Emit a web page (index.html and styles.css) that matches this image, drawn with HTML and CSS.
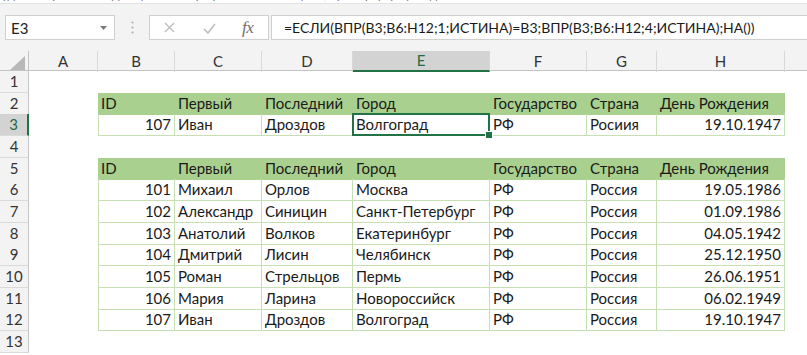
FILE: index.html
```html
<!DOCTYPE html>
<html lang="ru">
<head>
<meta charset="utf-8">
<link rel="stylesheet" href="styles.css">
</head>
<body>
<div class="app">
  <div class="topstrip"><span>удобно применять функцию ВПР при работе с таблицами, пример формулы для поиска</span></div>
  <div class="fbar">
    <div class="namebox"><span class="nb-text">E3</span>
      <svg class="nb-arrow" width="7" height="4" viewBox="0 0 7 4"><path d="M0 0h7L3.5 4z" fill="#7a7a7a"/></svg>
    </div>
    <div class="grip">
      <svg width="3" height="13" viewBox="0 0 3 13"><circle cx="1.5" cy="1.5" r="1.1" fill="#b0b0b0"/><circle cx="1.5" cy="6.5" r="1.1" fill="#b0b0b0"/><circle cx="1.5" cy="11.5" r="1.1" fill="#b0b0b0"/></svg>
    </div>
    <div class="iconbox">
      <svg class="ic-x" width="11" height="11" viewBox="0 0 11 11"><path d="M1 1l9 9M10 1l-9 9" stroke="#bdbdbd" stroke-width="1.3" fill="none"/></svg>
      <svg class="ic-check" width="13" height="11" viewBox="0 0 13 11"><path d="M1 6l4 4 7-9" stroke="#bdbdbd" stroke-width="1.6" fill="none"/></svg>
      <span class="ic-fx">fx</span>
    </div>
    <div class="formula">=ЕСЛИ(ВПР(B3;B6:H12;1;ИСТИНА)=B3;ВПР(B3;B6:H12;4;ИСТИНА);НА())</div>
  </div>

  <div class="sheet">
    <div class="row colhdr">
      <div class="corner"><svg width="15" height="14" viewBox="0 0 15 14"><path d="M15 0V14H0z" fill="#b8b8b8"/></svg></div>
      <div class="ch">A</div><div class="ch">B</div><div class="ch">C</div><div class="ch">D</div>
      <div class="ch active">E</div><div class="ch">F</div><div class="ch">G</div><div class="ch">H</div><div class="ch last"></div>
    </div>

    <div class="row"><div class="rh">1</div></div>

    <div class="row">
      <div class="rh">2</div><div class="c"></div>
      <div class="c th">ID</div><div class="c th">Первый</div><div class="c th">Последний</div><div class="c th">Город</div><div class="c th">Государство</div><div class="c th">Страна</div><div class="c th">День Рождения</div>
    </div>
    <div class="row">
      <div class="rh active">3</div><div class="c"></div>
      <div class="c td first num">107</div><div class="c td">Иван</div><div class="c td">Дроздов</div><div class="c td sel">Волгоград</div><div class="c td">РФ</div><div class="c td">Росиия</div><div class="c td num">19.10.1947</div>
    </div>

    <div class="row"><div class="rh">4</div></div>

    <div class="row">
      <div class="rh">5</div><div class="c"></div>
      <div class="c th">ID</div><div class="c th">Первый</div><div class="c th">Последний</div><div class="c th">Город</div><div class="c th">Государство</div><div class="c th">Страна</div><div class="c th">День Рождения</div>
    </div>
    <div class="row">
      <div class="rh">6</div><div class="c"></div>
      <div class="c td first num">101</div><div class="c td">Михаил</div><div class="c td">Орлов</div><div class="c td">Москва</div><div class="c td">РФ</div><div class="c td">Россия</div><div class="c td num">19.05.1986</div>
    </div>
    <div class="row">
      <div class="rh">7</div><div class="c"></div>
      <div class="c td first num">102</div><div class="c td">Александр</div><div class="c td">Синицин</div><div class="c td">Санкт-Петербург</div><div class="c td">РФ</div><div class="c td">Россия</div><div class="c td num">01.09.1986</div>
    </div>
    <div class="row">
      <div class="rh">8</div><div class="c"></div>
      <div class="c td first num">103</div><div class="c td">Анатолий</div><div class="c td">Волков</div><div class="c td">Екатеринбург</div><div class="c td">РФ</div><div class="c td">Россия</div><div class="c td num">04.05.1942</div>
    </div>
    <div class="row">
      <div class="rh">9</div><div class="c"></div>
      <div class="c td first num">104</div><div class="c td">Дмитрий</div><div class="c td">Лисин</div><div class="c td">Челябинск</div><div class="c td">РФ</div><div class="c td">Россия</div><div class="c td num">25.12.1950</div>
    </div>
    <div class="row">
      <div class="rh">10</div><div class="c"></div>
      <div class="c td first num">105</div><div class="c td">Роман</div><div class="c td">Стрельцов</div><div class="c td">Пермь</div><div class="c td">РФ</div><div class="c td">Россия</div><div class="c td num">26.06.1951</div>
    </div>
    <div class="row">
      <div class="rh">11</div><div class="c"></div>
      <div class="c td first num">106</div><div class="c td">Мария</div><div class="c td">Ларина</div><div class="c td">Новороссийск</div><div class="c td">РФ</div><div class="c td">Россия</div><div class="c td num">06.02.1949</div>
    </div>
    <div class="row">
      <div class="rh">12</div><div class="c"></div>
      <div class="c td first num">107</div><div class="c td">Иван</div><div class="c td">Дроздов</div><div class="c td">Волгоград</div><div class="c td">РФ</div><div class="c td">Россия</div><div class="c td num">19.10.1947</div>
    </div>
    <div class="row"><div class="rh">13</div></div>
  </div>
</div>
</body>
</html>
```

FILE: styles.css
```css
* { box-sizing: border-box; }
html, body { margin: 0; padding: 0; }
body {
  width: 807px;
  height: 355px;
  overflow: hidden;
  background: #ffffff;
  font-family: "Lato", "Liberation Sans", sans-serif;
  color: #000;
}
.app { width: 807px; }

.topstrip {
  height: 4px;
  overflow: hidden;
  background: #ffffff;
  border-bottom: 1px solid #e2e2e2;
}
.topstrip span {
  display: block;
  margin-top: -12px;
  padding-left: 2px;
  font-size: 12px;
  line-height: 13px;
  color: #777;
  white-space: nowrap;
}

.fbar {
  height: 47px;
  background: #f3f3f3;
  display: flex;
  align-items: flex-start;
  padding: 11px 0 0 5px;
}
.namebox {
  width: 110px;
  height: 25px;
  background: #fff;
  border: 1px solid #d0d0d0;
  display: flex;
  align-items: center;
  justify-content: space-between;
  padding: 0 7px 0 5px;
  font-size: 15px;
  color: #222;
}
.nb-arrow { margin-top: 1px; }
.grip {
  width: 34px;
  height: 25px;
  display: flex;
  align-items: center;
  justify-content: center;
}
.iconbox {
  width: 120px;
  height: 25px;
  background: #fff;
  border: 1px solid #d0d0d0;
  display: flex;
  align-items: center;
  padding-left: 14px;
}
.ic-x { margin-right: 28px; }
.ic-check { margin-right: 26px; margin-top: 1px; }
.ic-fx {
  font-family: "Liberation Serif", "DejaVu Serif", serif;
  font-style: italic;
  font-size: 17px;
  color: #6e6e6e;
  letter-spacing: -0.5px;
}
.formula {
  flex: 1;
  height: 25px;
  margin-left: 2px;
  background: #fff;
  border: 1px solid #d0d0d0;
  border-right: none;
  padding-left: 12px;
  font-size: 14px;
  line-height: 23px;
  color: #1a1a1a;
  white-space: nowrap;
  overflow: hidden;
}

.sheet { width: 807px; }
.row {
  display: grid;
  grid-template-columns: 29px 69px 77px 87px 91px 137px 97px 70px 128px 22px;
  height: 21.67px;
}
.colhdr {
  height: 20px;
  background: #f3f3f3;
  border-bottom: 1px solid #c4c4c4;
}
.corner {
  border-right: 1px solid #c4c4c4;
  display: flex;
  align-items: flex-end;
  justify-content: flex-end;
  padding: 0 3px 2px 0;
}
.ch {
  border-right: 1px solid #d8d8d8;
  text-align: center;
  font-size: 15px;
  line-height: 20px;
  color: #333;
}
.ch.last { border-right: none; }
.ch.active {
  background: #d3d3d3;
  color: #1d6b40;
  border-bottom: 2px solid #217346;
  line-height: 19px;
}
.rh {
  background: #f3f3f3;
  border-right: 1px solid #c4c4c4;
  border-bottom: 1px solid #dadada;
  text-align: center;
  font-size: 15px;
  line-height: 21px;
  color: #333;
}
.rh.active {
  background: #d3d3d3;
  color: #1d6b40;
  border-right: 2px solid #217346;
}
.c {
  font-size: 15px;
  line-height: 21px;
  padding: 0 3px;
  white-space: nowrap;
}
.th {
  background: #a9d08e;
  color: #1a1a1a;
}
.td {
  border-right: 1px solid #c6e0b4;
  border-bottom: 1px solid #c6e0b4;
  color: #1a1a1a;
}
.td.first { border-left: 1px solid #c6e0b4; }
.num { text-align: right; }
.sel { position: relative; }
.sel::after {
  content: "";
  position: absolute;
  left: -1px;
  top: -1px;
  right: -1px;
  bottom: -1px;
  border: 2px solid #217346;
}
.sel::before {
  content: "";
  position: absolute;
  right: -4px;
  bottom: -4px;
  width: 6px;
  height: 6px;
  background: #217346;
  border: 1px solid #fff;
  z-index: 1;
}
```
